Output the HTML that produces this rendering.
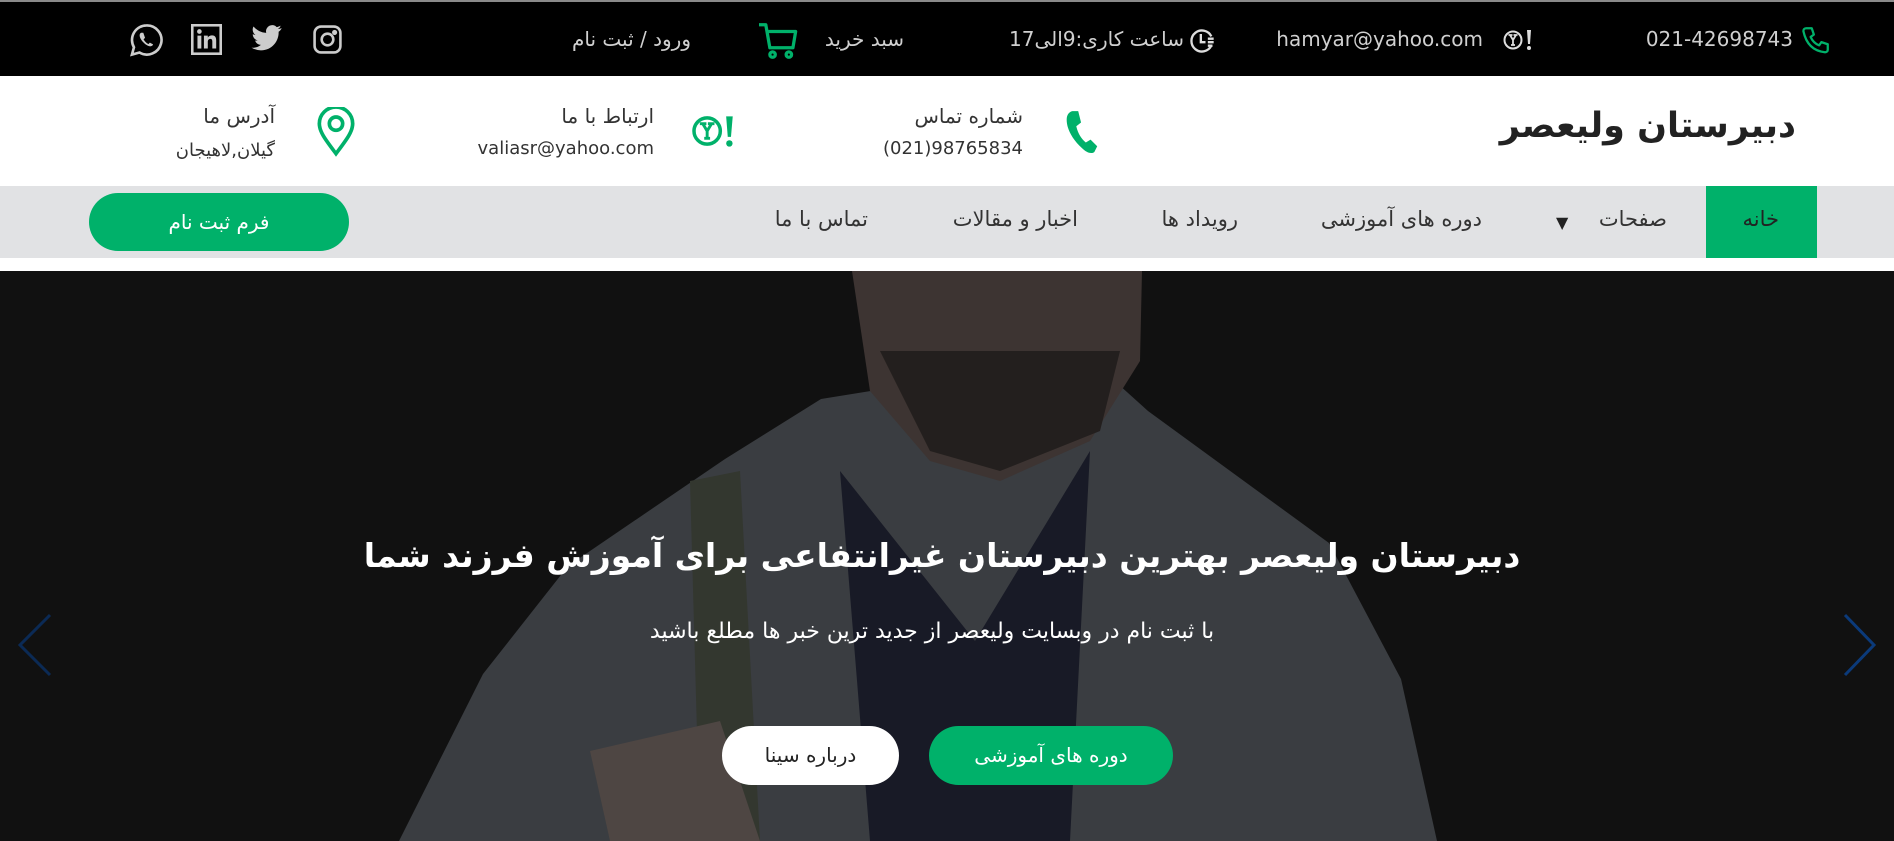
<!DOCTYPE html>
<html><head><meta charset="utf-8">
<style>
*{margin:0;padding:0;box-sizing:border-box}
body{width:1894px;height:841px;overflow:hidden;background:#fff;font-family:"DejaVu Sans","Liberation Sans",sans-serif;position:relative}
.a{position:absolute;white-space:nowrap}
.r{direction:rtl}
#top{position:absolute;left:0;top:0;width:1894px;height:76px;background:#000;border-top:2px solid #8a8a8a}
#top .a{color:#d0d0d0;font-size:20px;top:25px}
.ic{position:absolute}
#hdr .t{font-size:20px;color:#333}
#hdr .s{font-size:18px;color:#333}
#nav{position:absolute;left:0;top:186px;width:1894px;height:72px;background:#e1e2e4}
#nav .a{font-size:21px;color:#333;top:21px}
#hero{position:absolute;left:0;top:271px;width:1894px;height:570px;background:#0f0f0f;overflow:hidden}
.btn{position:absolute;border-radius:30px;font-size:20px;text-align:center;direction:rtl}
</style></head><body>

<div id="top">
  <svg class="ic" style="left:1799px;top:22px" width="34" height="34" viewBox="0 0 24 24" fill="none" stroke="#00b16a" stroke-width="1.6" stroke-linejoin="round"><path d="M5 3l4 0 1.5 4.5-2.3 1.6c1.2 2.8 3.2 4.8 6 6l1.6-2.3 4.5 1.5v4c0 1-1 1.7-2 1.6C10 19 5 14 3.1 5 3 4 3.8 3 5 3z"/></svg>
  <div class="a" style="right:101px">021-42698743</div>
  <svg class="ic" style="left:1503px;top:25px" width="30" height="26" viewBox="0 0 30 26"><circle cx="10" cy="13" r="8.5" fill="none" stroke="#ddd" stroke-width="2"/><path d="M5.5 8h4M10.5 8h4M7 8l3 5 3-5M10 13v5M8 18h4" stroke="#ddd" stroke-width="1.8" fill="none"/><path d="M24 3h4l-1 14h-2z" fill="#ddd"/><circle cx="26" cy="21" r="2" fill="#ddd"/></svg>
  <div class="a" style="right:411px">hamyar@yahoo.com</div>
  <svg class="ic" style="left:1188px;top:25px" width="28" height="28" viewBox="0 0 24 24" fill="none" stroke="#ddd" stroke-width="2"><path d="M20 8A9 9 0 1 0 20 16"/><path d="M11 6v7h4"/><path d="M17 10h5M17 13h5M17 16h4"/></svg>
  <div class="a r" style="right:710px">ساعت کاری:9الی17</div>
  <svg class="ic" style="left:757px;top:20px" width="42" height="38" viewBox="0 0 30 28" fill="none" stroke="#00b16a" stroke-width="2.4" stroke-linejoin="round"><path d="M1 2h5l3 17h17l2-12H8"/><circle cx="11" cy="24" r="2"/><circle cx="23" cy="24" r="2"/></svg>
  <div class="a r" style="right:990px">سبد خرید</div>
  <div class="a r" style="right:1203px">ورود / ثبت نام</div>
  <svg class="ic" style="left:312px;top:22px" width="31" height="31" viewBox="0 0 24 24" fill="none" stroke="#ccc" stroke-width="2"><rect x="2" y="2" width="20" height="20" rx="5"/><circle cx="12" cy="12" r="4.5"/><circle cx="17.5" cy="6.5" r="1" fill="#ccc"/></svg>
  <svg class="ic" style="left:250px;top:22px" width="33" height="30" viewBox="0 0 24 22" fill="#ccc"><path d="M23 3c-.8.4-1.7.6-2.6.7.9-.6 1.6-1.4 2-2.5-.9.5-1.9.9-2.9 1.1A4.5 4.5 0 0 0 11.8 6.5C8 6.300 4.700 4.500 2.500 1.800c-1.300 2.200-.5 5 1.400 6.200-.7 0-1.400-.2-2-.6 0 2.300 1.600 4.200 3.700 4.600-.7.2-1.400.2-2 .1.6 1.900 2.300 3.200 4.300 3.200A9 9 0 0 1 1 17.300 12.800 12.800 0 0 0 7.900 19.300c8.400 0 13-7 13-13v-.6c.9-.6 1.600-1.400 2.100-2.300z"/></svg>
  <svg class="ic" style="left:191px;top:22px" width="31" height="31" viewBox="0 0 24 24"><rect x="1" y="1" width="22" height="22" fill="none" stroke="#ccc" stroke-width="2"/><rect x="5" y="9" width="3" height="10" fill="#ccc"/><circle cx="6.5" cy="5.8" r="1.8" fill="#ccc"/><path d="M10 9h3v1.500c.6-1 1.800-1.700 3.300-1.700 2.500 0 3.200 1.700 3.200 4V19h-3v-5.500c0-1.200-.4-2-1.500-2s-2 .8-2 2.200V19h-3z" fill="#ccc"/></svg>
  <svg class="ic" style="left:129px;top:20px" width="35" height="36" viewBox="0 0 24 24" fill="none" stroke="#ccc" stroke-width="1.8"><path d="M12 2a10 10 0 0 0-8.600 15L2 22l5.200-1.400A10 10 0 1 0 12 2z"/><path d="M8.500 7c-.6 0-1.200.8-1.200 1.800 0 2.500 3.500 6.700 6.800 7.500 1 .2 2.300-.4 2.400-1.300l-2.200-1.200-1 1c-1.300-.6-2.700-2-3.300-3.300l1-1L9.800 7z" fill="#ccc" stroke="none"/></svg>
</div>

<div id="hdr">
  <div class="a r" style="right:98px;top:106px;font-size:35px;color:#222;font-weight:bold">دبیرستان ولیعصر</div>
  <svg class="ic" style="left:1063px;top:109px" width="38" height="46" viewBox="0 0 20 24" fill="#00b16a"><path d="M5 1l3 0 1.500 6-2.500 2c.8 3.500 2.500 6.500 5 8.500l2.500-1.500 3.500 3.500-1.500 3c-1.500 1.200-4 .5-6.500-2C4 15 1.500 9 2 4.500 2.300 2.600 3.500 1.200 5 1z"/></svg>
  <div class="a r t" style="right:871px;top:104px">شماره تماس</div>
  <div class="a s" style="right:871px;top:138px">(021)98765834</div>
  <svg class="ic" style="left:690px;top:112px" width="46" height="38" viewBox="0 0 30 26"><circle cx="11" cy="13" r="9" fill="none" stroke="#00b16a" stroke-width="2.4"/><path d="M6 8h4.500M11.500 8h4.500M8 8l3 5 3-5M11 13v5M9 18h4" stroke="#00b16a" stroke-width="2" fill="none"/><path d="M24 3h4.500l-1.200 14h-2.200z" fill="#00b16a"/><circle cx="26.200" cy="21.500" r="2.200" fill="#00b16a"/></svg>
  <div class="a r t" style="right:1240px;top:104px">ارتباط با ما</div>
  <div class="a s" style="right:1240px;top:138px">valiasr@yahoo.com</div>
  <svg class="ic" style="left:316px;top:107px" width="40" height="50" viewBox="0 0 24 30" fill="none" stroke="#00b16a" stroke-width="2.2"><path d="M12 28C6 20 2 15 2 10a10 10 0 0 1 20 0c0 5-4 10-10 18z"/><circle cx="12" cy="10" r="4"/></svg>
  <div class="a r t" style="right:1619px;top:104px">آدرس ما</div>
  <div class="a r s" style="right:1619px;top:140px">گیلان,لاهیجان</div>
</div>

<div id="nav">
  <div style="position:absolute;left:1706px;top:0;width:111px;height:72px;background:#00b16a"></div>
  <div class="a r" style="right:115px;color:#222">خانه</div>
  <div class="a r" style="right:227px">صفحات</div>
  <div class="a" style="left:1556px;top:27px;font-size:16px;color:#222">&#9660;</div>
  <div class="a r" style="right:412px">دوره های آموزشی</div>
  <div class="a r" style="right:656px">رویداد ها</div>
  <div class="a r" style="right:816px">اخبار و مقالات</div>
  <div class="a r" style="right:1026px">تماس با ما</div>
  <div class="btn" style="left:89px;top:7px;width:260px;height:58px;line-height:58px;background:#00b16a;color:#fff">فرم ثبت نام</div>
</div>

<div id="hero">
  <svg width="1894" height="570" viewBox="0 0 1894 570" style="position:absolute;left:0;top:0">
    <rect width="1894" height="570" fill="#111"/>
    <path d="M821 128 L725 188 L568 295 L483 403 L399 570 L1437 570 L1401 408 L1329 272 L1148 140 L1087 85 Z" fill="#3a3d41"/>
    <path d="M840 200 L975 370 L1090 180 L1070 570 L870 570 Z" fill="#181a26"/>
    <path d="M690 210 L740 200 L760 570 L700 570 Z" fill="#33372f"/>
    <path d="M852 0 L1142 0 L1140 90 L1090 170 L1000 210 L930 190 L870 120 Z" fill="#3d3432"/>
    <path d="M880 80 L1120 80 L1100 160 L1000 200 L930 180 Z" fill="#231f1e"/>
    <path d="M590 480 L720 450 L760 570 L610 570 Z" fill="#4e4643"/>
    <path d="M1845 344 L1874 374 L1845 404" fill="none" stroke="#0b3a7a" stroke-width="3"/>
    <path d="M50 344 L20 374 L50 404" fill="none" stroke="#0b2a55" stroke-width="3"/>
  </svg>
  <div class="a r" style="left:0;width:1894px;text-align:center;top:265px;font-size:33px;font-weight:bold;color:#fff"><span style="position:relative;left:-5px">دبیرستان ولیعصر بهترین دبیرستان غیرانتفاعی برای آموزش فرزند شما</span></div>
  <div class="a r" style="left:0;width:1894px;text-align:center;top:348px;font-size:22px;color:#fff"><span style="position:relative;left:-15px">با ثبت نام در وبسایت ولیعصر از جدید ترین خبر ها مطلع باشید</span></div>
  <div class="btn" style="left:929px;top:455px;width:244px;height:59px;line-height:59px;background:#00b16a;color:#fff">دوره های آموزشی</div>
  <div class="btn" style="left:722px;top:455px;width:177px;height:59px;line-height:59px;background:#fff;color:#222">درباره سینا</div>
</div>
</body></html>
